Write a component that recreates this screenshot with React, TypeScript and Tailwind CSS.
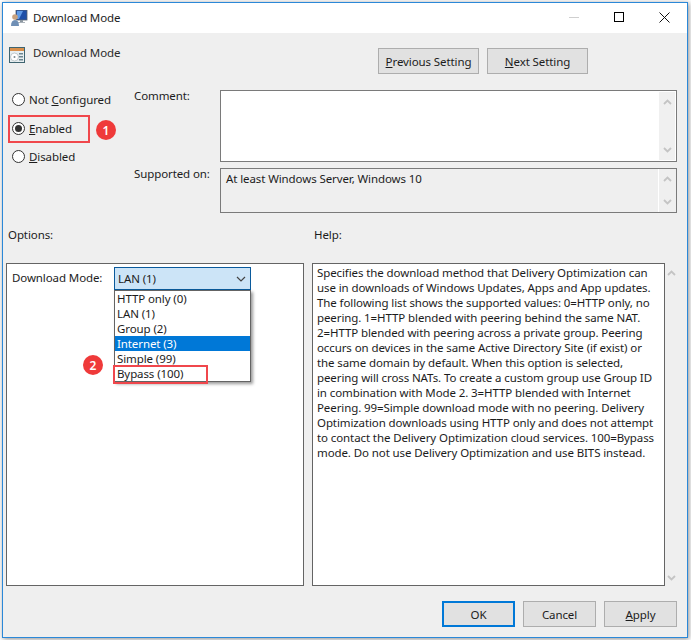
import React from 'react';

const helpLines = [
  'Specifies the download method that Delivery Optimization can',
  'use in downloads of Windows Updates, Apps and App updates.',
  'The following list shows the supported values: 0=HTTP only, no',
  'peering. 1=HTTP blended with peering behind the same NAT.',
  '2=HTTP blended with peering across a private group. Peering',
  'occurs on devices in the same Active Directory Site (if exist) or',
  'the same domain by default. When this option is selected,',
  'peering will cross NATs. To create a custom group use Group ID',
  'in combination with Mode 2. 3=HTTP blended with Internet',
  'Peering. 99=Simple download mode with no peering. Delivery',
  'Optimization downloads using HTTP only and does not attempt',
  'to contact the Delivery Optimization cloud services. 100=Bypass',
  'mode. Do not use Delivery Optimization and use BITS instead.',
];

const options = ['HTTP only (0)', 'LAN (1)', 'Group (2)', 'Internet (3)', 'Simple (99)', 'Bypass (100)'];

const Chevron = ({ up = false }: { up?: boolean }) => (
  <svg width="9" height="6" viewBox="0 0 9 6" className="block">
    <polyline
      points={up ? '1,5 4.5,1.5 8,5' : '1,1 4.5,4.5 8,1'}
      fill="none"
      stroke="#c4c4c4"
      strokeWidth="1.8"
    />
  </svg>
);

const PolicyIcon = () => (
  <svg width="16" height="16" viewBox="0 0 16 16" className="block">
    <rect x="0" y="0" width="16" height="16" fill="#3f6470" />
    <rect x="1" y="1" width="14" height="3" fill="#d98f4a" />
    <rect x="1" y="4" width="14" height="11" fill="#e8eef0" />
    <circle cx="5.5" cy="10" r="4" fill="#fff" stroke="#9aa8ad" strokeWidth="0.6" />
    <circle cx="5.5" cy="10" r="1" fill="#7a8a90" />
    <rect x="10" y="6" width="4" height="1.5" fill="#6d8690" />
    <rect x="10" y="9" width="4" height="1.5" fill="#6d8690" />
    <rect x="10" y="12" width="4" height="1.5" fill="#6d8690" />
  </svg>
);

const WindowIcon = () => (
  <svg width="17" height="16" viewBox="0 0 17 16" className="block">
    <rect x="5" y="0" width="11" height="10" fill="#1d4fa8" stroke="#55606c" strokeWidth="0.8" />
    <path d="M6 1h6l-4 8H6z" fill="#5f9be8" />
    <rect x="9" y="10" width="3" height="2" fill="#8b96a0" />
    <rect x="7" y="12" width="7" height="1" fill="#aab2ba" />
    <circle cx="4" cy="7" r="2.8" fill="#c9a27e" />
    <path d="M0 16c0-4 1.500-6 4-6s4 2 4 6z" fill="#6f8fb5" />
  </svg>
);

const Radio = ({ checked = false, pre = '', accel, post }: { checked?: boolean; pre?: string; accel: string; post: string }) => (
  <div className="flex items-center h-[15px]">
    <span className="w-[13px] h-[13px] rounded-full border border-[#333] bg-white flex items-center justify-center">
      {checked && <span className="w-[7px] h-[7px] rounded-full bg-[#333]" />}
    </span>
    <span className="ml-[4px] whitespace-nowrap">
      {pre}
      <span className="underline">{accel}</span>
      {post}
    </span>
  </div>
);

const Button = ({ className = '', children }: { className?: string; children: React.ReactNode }) => (
  <div className={`h-[26px] bg-[#e1e1e1] flex items-center justify-center ${className}`}>{children}</div>
);

const Badge = ({ n, className }: { n: number; className: string }) => (
  <div className={`absolute w-[20px] h-[20px] rounded-full bg-[#ef3a3a] text-white flex items-center justify-center text-[12px] font-semibold ${className}`}>
    {n}
  </div>
);

export default function App() {
  return (
    <div className="relative w-[691px] h-[640px] bg-white overflow-hidden text-[11.5px] tracking-[-0.1px] leading-[15px] text-[#1c1c1c] font-['Noto_Sans',sans-serif]">
      <div className="ml-[2px] pt-[2px]">
        <div className="w-[686px] h-[636px] border border-[#2b88d8] flex flex-col shadow-[1px_1px_5px_rgba(0,0,0,0.45)]">
          {/* Title bar */}
          <div className="h-[30px] bg-white flex items-center pl-[8px] shrink-0">
            <WindowIcon />
            <span className="ml-[5px] -mt-px">Download Mode</span>
            <div className="ml-auto flex items-center pb-[2px]">
              <span className="w-[10px] h-px bg-[#cfcfcf] mr-[35px]" />
              <span className="w-[10px] h-[10px] border border-black mr-[35px]" />
              <svg width="11" height="11" viewBox="0 0 11 11" className="mr-[17px]">
                <path d="M.5.5l10 10M10.500.5l-10 10" stroke="#111" strokeWidth="1" fill="none" />
              </svg>
            </div>
          </div>

          {/* Body */}
          <div className="flex-1 bg-[#efefef] pl-[3px] pr-[10px] flex flex-col">
            <div className="flex mt-[15px] h-[26px]">
              <div className="ml-[3px] flex items-start">
                <div className="-mt-px"><PolicyIcon /></div>
                <span className="ml-[8px] -mt-[3px] text-[#2a2a2a]">Download Mode</span>
              </div>
              <div className="ml-auto mr-[89px] flex gap-[8px]">
                <Button className="w-[101px] border border-[#adadad]">
                  <span><span className="underline">P</span>revious Setting</span>
                </Button>
                <Button className="w-[101px] border border-[#adadad]">
                  <span><span className="underline">N</span>ext Setting</span>
                </Button>
              </div>
            </div>

            <div className="flex mt-[16px] h-[123px]">
              <div className="w-[128px] pl-[6px] pt-[2px] flex flex-col gap-[13.5px] shrink-0">
                <Radio pre="Not " accel="C" post="onfigured" />
                <Radio checked accel="E" post="nabled" />
                <Radio accel="D" post="isabled" />
              </div>
              <div className="w-[86px] shrink-0 -mt-[2px]">
                <div className="h-[78px]">Comment:</div>
                <div>Supported on:</div>
              </div>
              <div className="flex-1 flex flex-col gap-[6px]">
                <div className="h-[72px] border border-[#7a7a7a] bg-white flex justify-end p-px">
                  <div className="w-[16px] bg-[#f0f0f0] flex flex-col items-center justify-between py-[7px]">
                    <Chevron up />
                    <Chevron />
                  </div>
                </div>
                <div className="h-[45px] border border-[#7a7a7a] bg-[#efefef] flex">
                  <div className="flex-1 pl-[5px] pt-[2px]">At least Windows Server, Windows 10</div>
                  <div className="w-[18px] border-l border-white flex flex-col items-center justify-between py-[7px]">
                    <Chevron up />
                    <Chevron />
                  </div>
                </div>
              </div>
            </div>

            <div className="flex mt-[14px] h-[15px]">
              <div className="w-[306px] pl-[2px]">Options:</div>
              <div className="pl-[2px]">Help:</div>
            </div>

            <div className="flex mt-[21px] h-[323px]">
              <div className="w-[298px] shrink-0 border border-[#646464] bg-white flex items-start pt-[3px] pl-[5px]">
                <span className="mt-[3px] w-[102px] shrink-0">Download Mode:</span>
                <div className="relative">
                  <div className="w-[137px] h-[23px] bg-[#cce4f7] border border-[#0a5a9c] flex items-center justify-between pl-[3px] pr-[4px]">
                    <span>LAN (1)</span>
                    <svg width="10" height="6" viewBox="0 0 10 6">
                      <polyline points="1,1 5,5 9,1" fill="none" stroke="#444" strokeWidth="1.2" />
                    </svg>
                  </div>
                  <div className="absolute left-0 top-[23px] w-[137px] h-[92px] bg-white border border-[#646464] shadow-[2px_2px_3px_rgba(0,0,0,0.4)]">
                    {options.map((o) => (
                      <div key={o} className={`h-[15px] pl-[2px] ${o === 'Internet (3)' ? 'bg-[#0078d7] text-white' : ''}`}>
                        {o}
                      </div>
                    ))}
                  </div>
                </div>
              </div>
              <div className="ml-[8px] w-[353px] shrink-0 border border-[#646464] bg-white pl-[4px] pt-[1px]">
                {helpLines.map((line) => (
                  <div key={line} className="whitespace-nowrap">{line}</div>
                ))}
              </div>
              <div className="w-[12px] shrink-0 flex flex-col items-end pr-px justify-between pt-[7px] pb-[5px]">
                <Chevron up />
                <Chevron />
              </div>
            </div>

            <div className="flex justify-end gap-[8px] mt-[15px]">
              <Button className="w-[73px] border-2 border-[#0078d7]">OK</Button>
              <Button className="w-[73px] border border-[#adadad]">Cancel</Button>
              <Button className="w-[73px] border border-[#adadad]">
                <span><span className="underline">A</span>pply</span>
              </Button>
            </div>
          </div>
        </div>
      </div>

      {/* Annotations */}
      <div className="absolute left-[8px] top-[115px] w-[82px] h-[28px] border-2 border-[#f0474c]" />
      <div className="absolute left-[113px] top-[365px] w-[95px] h-[19px] border-2 border-[#f0474c]" />
      <Badge n={1} className="left-[96px] top-[120px]" />
      <Badge n={2} className="left-[83px] top-[355px]" />
    </div>
  );
}
